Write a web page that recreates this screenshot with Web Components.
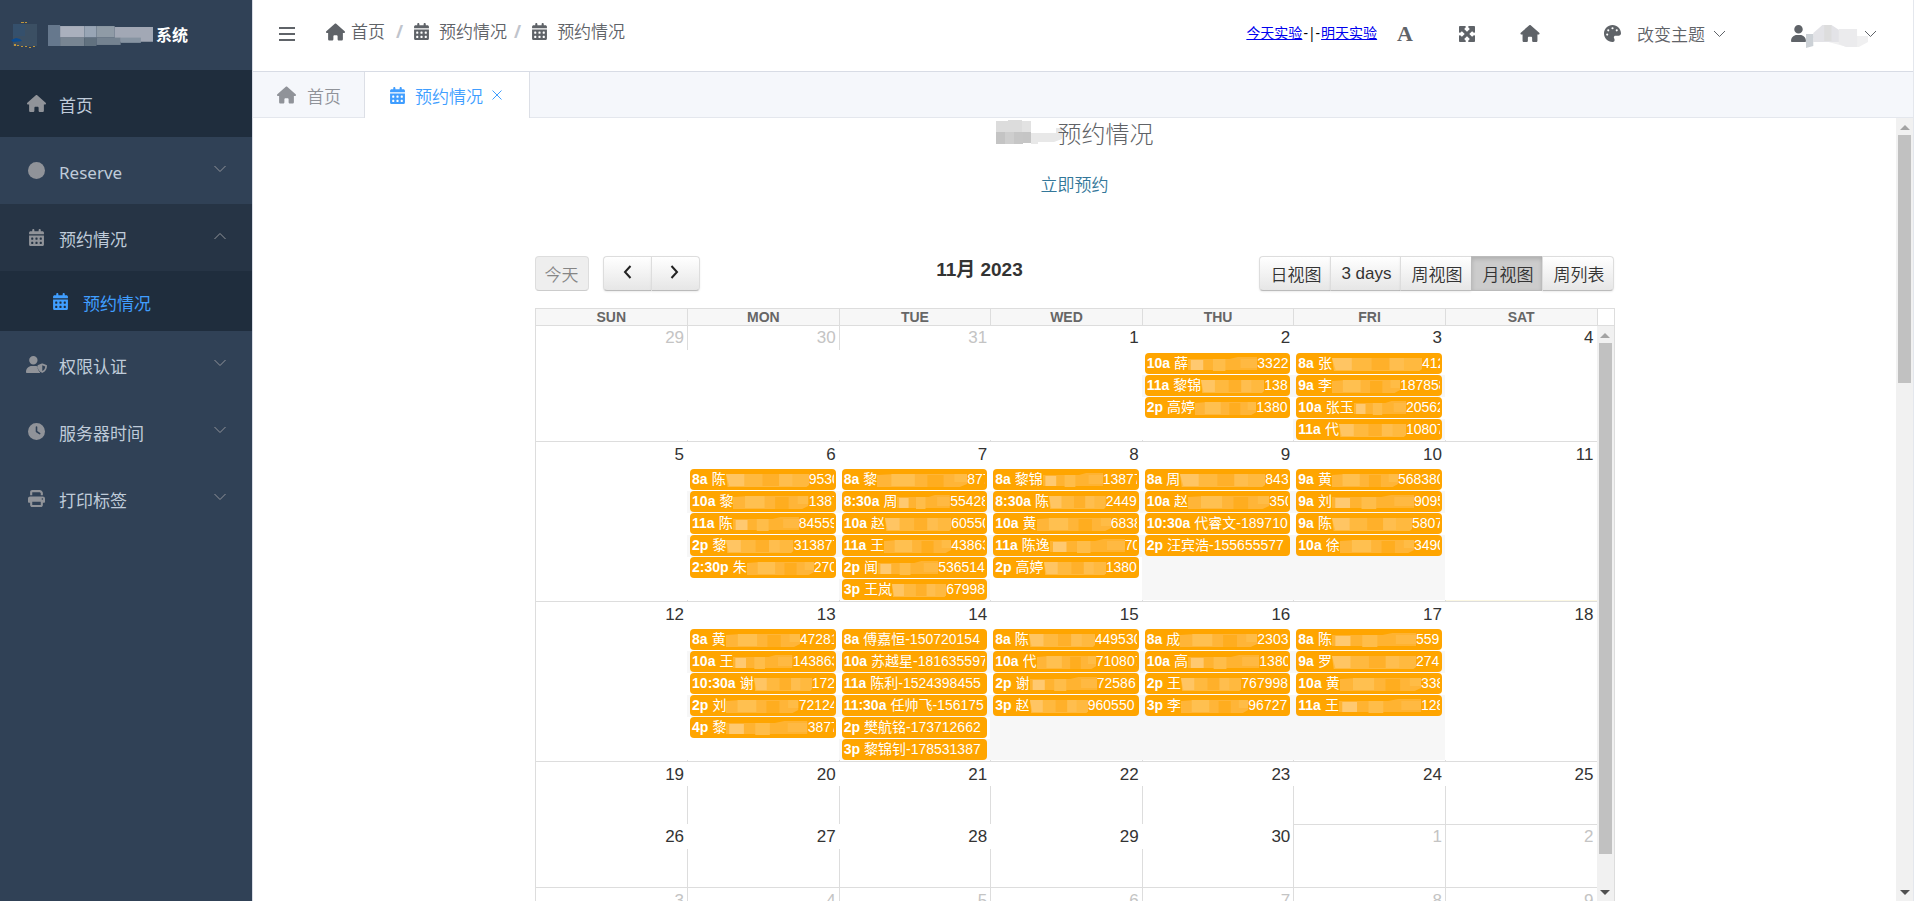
<!DOCTYPE html>
<html lang="zh-CN">
<head>
<meta charset="utf-8">
<title>预约情况</title>
<style>
body{margin:0;font-family:"Noto Sans","Noto Sans CJK SC",sans-serif;font-size:17px;font-weight:350;color:#606266;background:#fff}
</style>
</head>
<body>
<booking-app></booking-app>
<script>
const define = (name, css, html, setup) => {
  customElements.define(name, class extends HTMLElement {
    connectedCallback() {
      if (this.shadowRoot) return;
      const root = this.attachShadow({ mode: 'open' });
      const body = typeof html === 'function' ? html(this) : html;
      root.innerHTML = `<style>*{box-sizing:border-box}${css}</style>${body}`;
      if (setup) setup(root, this);
    }
  });
};

/* ---- icons ---- */
const squares = [[64,256],[192,256],[320,256],[64,384],[192,384],[320,384]]
  .map(([x, y]) => `M${x + 12} ${y}h40a12 12 0 0 1 12 12v40a12 12 0 0 1-12 12h-40a12 12 0 0 1-12-12v-40a12 12 0 0 1 12-12z`).join('');
const ICONS = {
  house: ['0 0 576 512', '<path d="M575.8 255.5c0 18-15 32.1-32 32.1l-32 0 .7 160.2c0 2.7-.2 5.4-.5 8.1l0 16.2c0 22.1-17.9 40-40 40l-16 0c-1.1 0-2.2 0-3.3-.1c-1.4 .1-2.8 .1-4.2 .1L416 512l-24 0c-22.1 0-40-17.9-40-40l0-24 0-64c0-17.7-14.3-32-32-32l-64 0c-17.7 0-32 14.3-32 32l0 64 0 24c0 22.1-17.9 40-40 40l-24 0-31.9 0c-1.5 0-3-.1-4.5-.2c-1.2 .1-2.4 .2-3.6 .2l-16 0c-22.1 0-40-17.9-40-40l0-112c0-.9 0-1.9 .1-2.8l0-69.7-32 0c-18 0-32-14-32-32.1c0-9 3-17 10-24L266.4 8c7-7 15-8 22-8s15 2 21 7L564.8 231.5c8 7 12 15 11 24z"/>'],
  calendar: ['0 0 448 512', `<path fill-rule="evenodd" d="M128 0c17.7 0 32 14.3 32 32l0 32 128 0 0-32c0-17.7 14.3-32 32-32s32 14.3 32 32l0 32 48 0c26.5 0 48 21.5 48 48l0 48L0 160l0-48C0 85.500 21.500 64 48 64l48 0 0-32c0-17.700 14.300-32 32-32zM0 192l448 0 0 272c0 26.500-21.500 48-48 48L48 512c-26.500 0-48-21.500-48-48L0 192z${squares}"/>`],
  circle: ['0 0 512 512', '<circle cx="256" cy="256" r="256"/>'],
  user: ['0 0 448 512', '<path d="M224 256A128 128 0 1 0 224 0a128 128 0 1 0 0 256zm-45.7 48C79.8 304 0 383.8 0 482.3C0 498.7 13.3 512 29.7 512l388.6 0c16.4 0 29.7-13.3 29.7-29.7C448 383.8 368.2 304 269.7 304l-91.4 0z"/>'],
  shield: ['0 0 640 512', '<path fill-rule="evenodd" d="M224 256A128 128 0 1 0 224 0a128 128 0 1 0 0 256zM178 304C80 304 0 384 0 482c0 17 13 30 30 30h389c6 0 12-2 17-5-49-44-84-105-84-172v-18c-25-9-53-13-82-13zM482 227c9-4 19-4 28 0l112 45c11 4 18 13 18 24 0 80-33 168-133 214-7 3-15 3-22 0-100-46-133-134-133-214 0-11 7-20 18-24zm14 52v178c60-29 86-82 90-142z"/>'],
  clock: ['0 0 512 512', '<path fill-rule="evenodd" d="M256 0a256 256 0 1 1 0 512A256 256 0 1 1 256 0zM232 120l0 136c0 8 4 15.500 10.700 20l96 64c11 7.400 25.900 4.400 33.300-6.700s4.400-25.900-6.700-33.300L280 243.200 280 120c0-13.300-10.700-24-24-24s-24 10.700-24 24z"/>'],
  print: ['0 0 512 512', '<path fill-rule="evenodd" d="M128 0C92.7 0 64 28.7 64 64l0 96 64 0 0-96 226.7 0L384 93.3l0 66.7 64 0 0-66.700c0-17-6.700-33.300-18.700-45.300L400 18.700C388 6.700 371.700 0 354.700 0L128 0zM384 352l0 96-256 0 0-96 256 0zm64 32l32 0c17.700 0 32-14.300 32-32l0-96c0-35.300-28.700-64-64-64L64 192c-35.300 0-64 28.700-64 64l0 96c0 17.700 14.300 32 32 32l32 0 0 64c0 35.300 28.700 64 64 64l256 0c35.300 0 64-28.700 64-64l0-64zM432 248a24 24 0 1 1 0 48 24 24 0 1 1 0-48z"/>'],
  palette: ['0 0 512 512', '<path fill-rule="evenodd" d="M512 256c0 .9 0 1.800 0 2.700c-.4 36.500-33.600 61.300-70.100 61.300L344 320c-26.500 0-48 21.500-48 48c0 3.400 .4 6.700 1 9.900c2.100 10.200 6.500 20 10.800 29.900c6.100 13.800 12.100 27.500 12.100 42c0 31.800-21.600 60.700-53.400 62c-3.500 .1-7 .2-10.600 .2C114.600 512 0 397.400 0 256S114.600 0 256 0S512 114.600 512 256zM128 288a32 32 0 1 0 -64 0 32 32 0 1 0 64 0zm0-96a32 32 0 1 0 0-64 32 32 0 1 0 0 64zM288 96a32 32 0 1 0 -64 0 32 32 0 1 0 64 0zm96 96a32 32 0 1 0 0-64 32 32 0 1 0 0 64z"/>'],
  expand: ['32 32 448 448', '<path d="M200 32L56 32C42.7 32 32 42.7 32 56l0 144c0 9.7 5.800 18.500 14.800 22.200s19.300 1.700 26.200-5.200l40-40 79 79-79 79L73 295c-6.900-6.900-17.200-8.900-26.200-5.200S32 302.300 32 312l0 144c0 13.300 10.700 24 24 24l144 0c9.700 0 18.500-5.800 22.200-14.800s1.700-19.300-5.200-26.200l-40-40 79-79 79 79-40 40c-6.900 6.900-8.900 17.200-5.200 26.200s12.500 14.800 22.200 14.800l144 0c13.300 0 24-10.700 24-24l0-144c0-9.700-5.800-18.500-14.800-22.200s-19.300-1.700-26.200 5.200l-40 40-79-79 79-79 40 40c6.900 6.900 17.200 8.900 26.200 5.200s14.800-12.500 14.800-22.200l0-144c0-13.300-10.700-24-24-24L312 32c-9.700 0-18.500 5.800-22.200 14.800s-1.700 19.300 5.200 26.200l40 40-79 79-79-79 40-40c6.900-6.900 8.900-17.200 5.200-26.200S209.700 32 200 32z"/>'],
  bars: ['0 0 16 14', '<path d="M0 0h16v2H0zM0 6h16v2H0zM0 12h16v2H0z"/>'],
  down: ['0 0 12 8', '<path fill="none" stroke="currentColor" d="M.5 1L6 6.500 11.500 1"/>'],
  up: ['0 0 12 8', '<path fill="none" stroke="currentColor" d="M.5 7L6 1.500 11.500 7"/>'],
  close: ['0 0 10 10', '<path fill="none" stroke="currentColor" d="M.5 .5l9 9M9.500 .5l-9 9"/>'],
  prev: ['0 0 10 14', '<path fill="none" stroke="currentColor" stroke-width="2" d="M8.500 1L3 7l5.500 6"/>'],
  next: ['0 0 10 14', '<path fill="none" stroke="currentColor" stroke-width="2" d="M1.500 1L7 7l-5.500 6"/>'],
  logo: ['0 0 26 26', '<path fill="#3b4f63" d="M2 2h24v22H2z"/><path fill="#35506c" d="M2 2h12v12H2z"/><path fill="#0b4a8f" d="M0 18l5-2 4 1 2 2-9 1z"/><path fill="#c0963c" d="M10 0h3v1h-3zM14 0h2v1h-2zM3 22h2v2H3zM6 23h2v1H6zM10 24h2v1h-2zM14 24h2v1h-2zM18 25h2v1h-2zM22 24h2v1h-2z"/>']
};
define('app-icon', ':host{display:inline-flex;flex:none}svg{display:block;fill:currentColor;width:var(--w,100%);height:var(--h,16px)}',
  el => { const i = ICONS[el.getAttribute('name')]; return `<svg viewBox="${i[0]}" aria-hidden="true">${i[1]}</svg>`; },
  (root, el) => {
    const s = root.querySelector('svg');
    s.style.setProperty('--w', el.getAttribute('w') + 'px');
    s.style.setProperty('--h', el.getAttribute('h') + 'px');
  });

/* ---- mosaics that hide private data ---- */
const MOSAICS = {
  brand: ['0 0 105 20', '<path fill="#66788d" d="M0 0h12v20H0z"/><path fill="#aab0bd" d="M12 1h24v11H12z"/><path fill="#98a5b5" d="M36 1h12v11H36z"/><path fill="#8f9ba6" d="M48 1h18v11H48z"/><path fill="#a2a8b5" d="M66 2h38v14H66z"/><path fill="#788592" d="M12 12h24v8H12z"/><path fill="#61717f" d="M36 12h12v8H36z"/><path fill="#748290" d="M48 12h24v7H48z"/><path fill="#8794a2" d="M72 12h20v5H72z"/>'],
  title: ['0 0 66 24', '<path fill="#dcdcdc" d="M0 1h12V0h14v12H0z"/><path fill="#c4c4c4" d="M0 12h9v12H0z"/><path fill="#cecece" d="M9 12h9v12H9z"/><path fill="#c6c6c6" d="M18 12h9v12h-9z"/><path fill="#e2e2e2" d="M26 1h9v11h-9z"/><path fill="#c5c5c5" d="M27 12h8v11h-8z"/><path fill="#e8e8e8" d="M35 13h25V8h6v11l-8 3H42v2h-7z"/>'],
  user: ['0 0 68 24', '<path fill="#f0f0f1" d="M0 12h68v6l-10 5H45z"/><path fill="#e3e3e7" d="M8 9l10-8 10 0 10 6v11H8z"/><path fill="#ccd1d6" d="M0 10h8v12l-8 2z"/><path fill="#ddd" d="M20 1h8v16h-8z"/><path fill="#ebebed" d="M36 5h20v18H44l-8-3z"/>'],
  chip0: ['0 0 100 14', '<path fill="#ffb93f" d="M0 1h100v11l-3 2H2z"/><path fill="#ffc563" d="M0 1h22v12H4z"/><path fill="#ffb02a" d="M44 1h20v12H44z"/><path fill="#ffbe4e" d="M64 1h16v12H64z"/>'],
  chip1: ['0 0 100 14', '<path fill="#ffb538" d="M0 2l20-1h80v10l-8 3H0z"/><path fill="#ffc050" d="M16 1h26v12H16z"/><path fill="#ffad1f" d="M56 2h18v12H56z"/><path fill="#ffbc46" d="M86 1h14v8H86z"/>'],
  chip2: ['0 0 100 14', '<path fill="#ffb331" d="M0 2h60l12-2h28v13H0z"/><path fill="#ffc970" d="M4 3h18v10H4z"/><path fill="#ffbd49" d="M36 2h18v12H36z"/><path fill="#ffb942" d="M76 2h24v9H76z"/>']
};
define('pixel-mask', ':host{display:block;flex:none}svg{display:block;width:100%;height:100%}',
  el => { const m = MOSAICS[el.getAttribute('kind')]; return `<svg viewBox="${m[0]}" preserveAspectRatio="none" aria-hidden="true">${m[1]}</svg>`; });

/* ---- scroll bar ---- */
define('scroll-track', `
  :host{display:flex;flex-direction:column;align-items:center;flex:none;width:17px;background:#f1f1f1}
  i{flex:none;width:0;height:0;border:5px solid transparent;margin:0 0 6px}
  .u{border-bottom-color:#a3a3a3;border-top:0;margin:7px 0 5px}
  .d{border-top-color:#505050;border-bottom:0;margin:auto 0 6px}
  b{width:13px;background:#c1c1c1;min-height:20px;flex:0 1 var(--thumb,50%)}`,
  '<i class="u"></i><b></b><i class="d"></i>');

/* ---- side menu ---- */
define('menu-item', `
  :host{display:block}
  a{display:flex;align-items:center;height:67px;padding:0 26px 0 24px;color:#bfcbd9;text-decoration:none}
  .i{width:24px;display:flex;justify-content:center;color:#909399;margin-right:11px}
  .t{flex:1;line-height:26px;padding-top:5px}
  .c{color:#909399;padding-bottom:3px;display:flex}
  :host([dark]) a{background:#1f2d3d}
  :host([open]) a{background:#263445}
  :host([sub]) a{background:#1f2d3d;height:60px;padding-left:48px;color:#409eff}
  :host([sub]) .i{color:#409eff}`,
  el => `<a href="#"><span class="i"><app-icon name="${el.getAttribute('icon')}" w="${el.getAttribute('w') || 17}" h="${el.getAttribute('h') || 17}"></app-icon></span><span class="t"><slot></slot></span>${el.hasAttribute('arrow') ? `<span class="c"><app-icon name="${el.getAttribute('arrow')}" w="12" h="8"></app-icon></span>` : ''}</a>`);

define('side-menu', `
  :host{display:block;width:252px;flex:none;background:#304156;box-shadow:1px 0 0 #d8dce5;font-weight:400}
  .logo{display:flex;align-items:center;height:70px;padding-left:11px;color:#fff;font-size:16px;font-weight:700}
  .logo span{margin:0 0 2px 2px}
  pixel-mask{width:106px;height:21px;margin-left:11px}`, `
  <div class="logo"><app-icon name="logo" w="26" h="26"></app-icon><pixel-mask kind="brand"></pixel-mask><span>系统</span></div>
  <nav>
    <menu-item icon="house" dark w="19">首页</menu-item>
    <menu-item icon="circle" arrow="down">Reserve</menu-item>
    <menu-item icon="calendar" arrow="up" open>预约情况</menu-item>
    <menu-item icon="calendar" sub>预约情况</menu-item>
    <menu-item icon="shield" arrow="down" w="21">权限认证</menu-item>
    <menu-item icon="clock" arrow="down">服务器时间</menu-item>
    <menu-item icon="print" arrow="down">打印标签</menu-item>
  </nav>`);

/* ---- top bar ---- */
define('top-bar', `
  :host{display:flex;align-items:center;height:72px;padding:0 36px 0 26px;border-bottom:1px solid #d8dce5;color:#5f6368}
  button{display:flex;align-items:center;padding:0;border:0;background:none;font:inherit;color:inherit}
  :host>button,button[aria-label="菜单"]{padding-bottom:4px}
  ol{display:flex;align-items:center;list-style:none;margin:0 auto 8px 31px;padding:0;line-height:26px}
  li{display:flex;align-items:center}
  li a{display:flex;align-items:center;color:inherit;text-decoration:none;gap:9px}
  li:first-child a{gap:6px}
  li+li::before{content:"/";color:#c0c4cc;font-weight:700;margin:0 10px 0 7px}
  li:nth-child(2)::before{margin-left:11px}
  .links{font-size:14px;font-weight:400;color:#000;margin:0 20px 4px 0;white-space:nowrap}
  .links i{font-style:normal;margin:0 1px}
  .links a{color:#00e}
  .a{font:700 22px/24px "Liberation Serif",serif}
  .tools{display:flex;align-items:center;padding-bottom:4px}
  .x{margin-left:46px}.h{margin-left:45px}.p{margin-left:64px;gap:16px}.u{margin-left:65px}
  .p app-icon+span{margin-right:-8px}
  pixel-mask{width:62px;height:24px;margin-right:-4px;margin-top:4px}`, `
  <button aria-label="菜单"><app-icon name="bars" w="16" h="14"></app-icon></button>
  <ol>
    <li><a href="#"><app-icon name="house" w="19" h="18"></app-icon>首页</a></li>
    <li><a href="#"><app-icon name="calendar" w="17" h="17"></app-icon>预约情况</a></li>
    <li><a href="#"><app-icon name="calendar" w="17" h="17"></app-icon>预约情况</a></li>
  </ol>
  <div class="tools">
    <span class="links"><a href="#">今天实验</a><i>-|-</i><a href="#">明天实验</a></span>
    <button class="a" aria-label="字号">A</button>
    <button class="x" aria-label="全屏"><app-icon name="expand" w="16" h="16"></app-icon></button>
    <button class="h" aria-label="首页"><app-icon name="house" w="20" h="17"></app-icon></button>
    <button class="p"><app-icon name="palette" w="17" h="17"></app-icon><span>改变主题</span><app-icon name="down" w="13" h="8"></app-icon></button>
    <button class="u" aria-label="用户"><app-icon name="user" w="15" h="17"></app-icon><pixel-mask kind="user"></pixel-mask><app-icon name="down" w="13" h="8"></app-icon></button>
  </div>`);

/* ---- tabs ---- */
define('tab-strip', `
  :host{display:flex;height:46px;background:#f5f7fb;border-bottom:1px solid #e4e7ed}
  a{display:flex;align-items:center;height:46px;padding:0 23px 0 24px;color:#909399;text-decoration:none;gap:11px;border-right:1px solid #dcdfe6}
  a.on{background:#fff;color:#409eff;gap:9px;padding-right:27px}`, `
  <a href="#"><app-icon name="house" w="19" h="18"></app-icon>首页</a>
  <a href="#" class="on" aria-current="page"><app-icon name="calendar" w="17" h="17"></app-icon>预约情况<app-icon name="close" w="10" h="10"></app-icon></a>`);

/* ---- calendar ---- */
define('event-chip', `
  :host{display:block;flex:none;padding:0 3px 1px}
  :host(:nth-of-type(even)){background:#f7f7f7}
  :host(:last-of-type){flex:1;padding-bottom:0}
  a{display:flex;align-items:center;height:21px;padding:0 2px;border-radius:4px;background:#ffa500;color:#fff;text-decoration:none;
    font:400 14px/21px "Liberation Sans","Noto Sans CJK SC",sans-serif;white-space:nowrap;overflow:hidden}
  b{font-weight:700;margin-right:4px}
  pixel-mask{flex:1 1 0;height:14px;min-width:0}
  .e{overflow:hidden;flex:none;width:var(--e)}
  .n{overflow:hidden}`,
  el => {
    const [time, name, end, w, kind] = el.getAttribute('data').split('|');
    return `<a href="#"><b>${time}</b><span class="n">${name}</span>` +
      (end ? `<pixel-mask kind="chip${kind}"></pixel-mask><span class="e" style="--e:${w}px">${end}</span>` : '') + '</a>';
  });

const EVENTS = {
  2: ['10a|薛|3322|31', '11a|黎锦|1387|24', '2p|高婷|1380|32'],
  3: ['8a|张|412|18', '9a|李|187858|40', '10a|张玉|20562|34', '11a|代|10807|34'],
  6: ['8a|陈|9530|25', '10a|黎|1387|25', '11a|陈|84559|35', '2p|黎|313877|40', '2:30p|朱|270|20'],
  7: ['8a|黎|877|18', '8:30a|周|55428|35', '10a|赵|60550|34', '11a|王|43863|34', '2p|闻|536514|47', '3p|王岚|67998|39'],
  8: ['8a|黎锦|13877|34', '8:30a|陈|2449|31', '10a|黄|6838|26', '11a|陈逸|70|12', '2p|高婷|1380|31'],
  9: ['8a|周|843|23', '10a|赵|350|19', '10:30a|代睿文-189710', '2p|汪宾浩-155655577'],
  10: ['9a|黄|568380|42', '9a|刘|9095|26', '9a|陈|5807|28', '10a|徐|3490|26'],
  13: ['8a|黄|47281|34', '10a|王|143863|41', '10:30a|谢|172|22', '2p|刘|72124|35', '4p|黎|3877|26'],
  14: ['8a|傅嘉恒-150720154', '10a|苏越星-181635597', '11a|陈利-1524398455', '11:30a|任帅飞-156175', '2p|樊航铭-173712662', '3p|黎锦钊-178531387'],
  15: ['8a|陈|449530|42', '10a|代|710807|41', '2p|谢|72586|40', '3p|赵|960550|49'],
  16: ['8a|成|2303|31', '10a|高|1380|29', '2p|王|767998|47', '3p|李|96727|40'],
  17: ['8a|陈|559|24', '9a|罗|274|24', '10a|黄|338|19', '11a|王|128|19']
};
define('month-grid', `
  :host{display:flex;flex:1;min-height:0;flex-direction:column;border:1px solid #ddd;border-bottom:0;
    font-family:"Liberation Sans",sans-serif;font-weight:400;color:#333}
  table{width:100%;table-layout:fixed;border-collapse:separate;border-spacing:0}
  .head{display:flex;border-bottom:1px solid #ddd}
  th{height:16px;padding:0;background:#f7f7f7;color:#666;font-size:14px;font-weight:700;line-height:16px}
  th+th{border-left:1px solid #ddd}
  .head i{flex:none;width:17px;border-left:1px solid #ddd}
  .scroll{display:flex;flex:1;min-height:0}
  .view{flex:1;min-width:0;overflow:hidden}
  td{height:1px;padding:0;vertical-align:top}
  tr+tr td{border-top:1px solid #ddd}
  tr.plain td{border-top-color:transparent}
  tr.plain td.out{border-top-color:#ddd}
  .cell{display:flex;flex-direction:column;height:100%}
  .num{flex:none;height:24px;line-height:24px;padding-right:3px;text-align:right;border-left:1px solid transparent}
  tr+tr .num{line-height:26px}
  tr.plain .num{line-height:24px}
  .out .num{color:#c4c4c4}
  td.out+td.out .num,td.out.first .num{border-left-color:#ddd}
  .day{flex:1;display:flex;flex-direction:column;padding-top:3px}
  .free td+td .day{border-left:1px solid #ddd;min-height:38px}
  .free .tick{display:none}
  .tick{flex:none;height:1px}
  .busy td+td .tick{border-left:1px solid #ddd}
  .today .tick{background:#fcf8e3}
  scroll-track{width:17px;--thumb:511px}`,
  () => {
    const heads = ['SUN', 'MON', 'TUE', 'WED', 'THU', 'FRI', 'SAT'].map(d => `<th scope="col">${d}</th>`).join('');
    let rows = '';
    for (let w = 0; w < 6; w++) {
      let cells = '';
      for (let d = 0; d < 7; d++) {
        const n = w * 7 + d - 2;
        const out = n < 1 || n > 30;
        const label = n < 1 ? n + 31 : n > 30 ? n - 30 : n;
        const chips = (!out && EVENTS[n] || []).map((e, k) => {
          const p = e.split('|');
          return `<event-chip data="${p[2] ? e + '|' + (n + k) % 3 : e}"></event-chip>`;
        }).join('');
        cells += `<td class="${out ? 'out' : ''} ${n === 31 ? 'first' : ''} ${n === 11 ? 'today' : ''}"><div class="cell"><div class="num">${label}</div><div class="day">${chips}</div><div class="tick"></div></div></td>`;
      }
      rows += `<tr class="${w < 3 ? 'busy' : 'free'} ${w === 4 ? 'plain' : ''}">${cells}</tr>`;
    }
    return `<div class="head"><table><thead><tr>${heads}</tr></thead></table><i></i></div>
      <div class="scroll"><div class="view"><table><tbody>${rows}</tbody></table></div><scroll-track></scroll-track></div>`;
  });

define('calendar-toolbar', `
  :host{display:flex;justify-content:space-between;align-items:flex-start;margin-bottom:17px;
    font-family:"Liberation Sans","Noto Sans CJK SC",sans-serif;color:#333}
  div{display:flex}
  button{height:35px;padding:0 10px;border:1px solid;border-color:#ddd #ddd #bbb;border-right-width:0;margin:0;
    background:linear-gradient(#fff,#e6e6e6);font:inherit;color:#333;box-shadow:0 1px 2px rgba(0,0,0,.08)}
  .views button{padding:0 9px 0 10px}
  button:first-child{border-radius:4px 0 0 4px}
  button:last-child{border-radius:0 4px 4px 0;border-right-width:1px}
  .today{border-radius:4px!important;border-right-width:1px;padding:0 9px;margin-right:14px;background:#eee;color:#858585;border-color:#ddd #ddd #ccc;box-shadow:none}
  .nav{width:48px;padding:0 0 3px;display:flex;align-items:center;justify-content:center;color:#222}
  .nav:last-child{width:49px}
  .on{background:#ccc;box-shadow:inset 0 2px 4px rgba(0,0,0,.15);border-color:#bbb}
  h2{margin:0;font-size:19px;line-height:27px;font-weight:700}
  .nav.f{border-radius:4px 0 0 4px}`, `
  <div><button class="today" disabled>今天</button><button class="nav f" aria-label="上一页"><app-icon name="prev" w="10" h="14"></app-icon></button><button class="nav" aria-label="下一页"><app-icon name="next" w="10" h="14"></app-icon></button></div>
  <h2>11月 2023</h2>
  <div class="views"><button>日视图</button><button>3 days</button><button>周视图</button><button class="on">月视图</button><button>周列表</button></div>`);

define('booking-page', `
  :host{display:flex;flex:1;min-height:0}
  main{flex:1;min-width:0;display:flex;flex-direction:column;padding:0 24px}
  h1{display:flex;justify-content:center;align-items:center;height:32px;margin:0;font-size:24px;font-weight:300;line-height:32px}
  h1 pixel-mask{width:66px;height:24px;margin-right:-4px;margin-bottom:4px}
  .book{align-self:center;margin:22px 0 58px;line-height:26px;color:#337799;text-decoration:none}
  .cal{display:flex;flex-direction:column;flex:1;min-height:0;width:100%;max-width:1080px;margin:0 auto}
  scroll-track{--thumb:248px}`, `
  <main>
    <h1><pixel-mask kind="title"></pixel-mask>预约情况</h1>
    <a class="book" href="#">立即预约</a>
    <div class="cal"><calendar-toolbar></calendar-toolbar><month-grid></month-grid></div>
  </main>
  <scroll-track></scroll-track>`);

define('booking-app', `
  :host{display:flex;height:100vh;overflow:hidden}
  .right{flex:1;min-width:0;display:flex;flex-direction:column;margin-left:1px;border-right:1px solid #e4e7ed}`, `
  <side-menu></side-menu>
  <div class="right"><top-bar></top-bar><tab-strip></tab-strip><booking-page></booking-page></div>`);
</script>
</body>
</html>
